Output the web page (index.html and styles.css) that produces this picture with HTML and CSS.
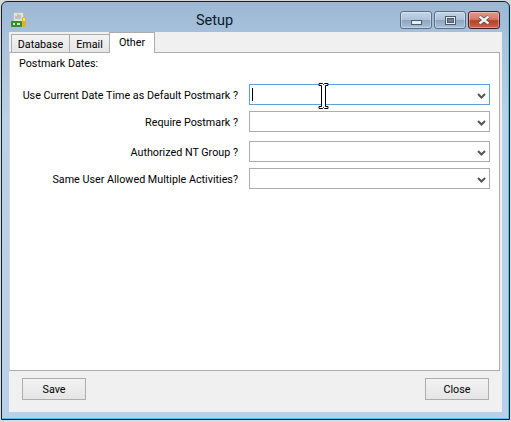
FILE: index.html
```html
<!DOCTYPE html>
<html lang="en">
<head>
<meta charset="utf-8">
<title>Setup</title>
<link rel="stylesheet" href="styles.css">
</head>
<body>
<div class="window">
  <header class="titlebar">
    <svg class="app-icon" width="16" height="16" viewBox="0 0 16 16">
      <rect x="2.500" y="0.500" width="10" height="9" fill="#dfe3dc" stroke="#aab0a8" stroke-width="0.5"/>
      <path d="M5 7V4M7 7V2M9 7V3" stroke="#9aa29a" stroke-width="1"/>
      <rect x="0" y="9" width="11" height="6" rx="1" fill="#3d8a2a"/>
      <path d="M2 11h2v2H2zM6 11h3v2H6z" fill="#cfe8b8"/>
      <rect x="11" y="5" width="4" height="10" rx="1" fill="#d8b42c"/>
      <rect x="12" y="6" width="2" height="3" fill="#f4e27a"/>
    </svg>
    <span class="title">Setup</span>
    <div class="controls">
      <div class="ctl"><span class="min-glyph"></span></div>
      <div class="ctl"><span class="max-glyph"></span></div>
      <div class="ctl ctl-close">
        <svg width="14" height="10" viewBox="0 0 14 10"><path d="M2.5 1.5 L11.5 8.5 M11.5 1.5 L2.5 8.5" stroke="#50403f" stroke-width="3.6"/><path d="M2.5 1.5 L11.5 8.5 M11.5 1.5 L2.5 8.5" stroke="#f2f2f2" stroke-width="2.4"/></svg>
      </div>
    </div>
  </header>
  <div class="client">
    <nav class="tabs">
      <div class="tab">Database</div>
      <div class="tab">Email</div>
      <div class="tab tab-active">Other</div>
    </nav>
    <main class="page">
      <div class="heading">Postmark Dates:</div>
      <div class="form">
        <div class="row row-a">
          <label class="lbl">Use Current Date Time as Default Postmark ?</label>
          <div class="combo combo-focus"><span class="caret"></span><svg class="chev" width="9" height="6" viewBox="0 0 9 6"><path d="M1 1 L4.500 4.500 L8 1" fill="none" stroke="#555" stroke-width="2"/></svg></div>
        </div>
        <div class="row row-b">
          <label class="lbl">Require Postmark ?</label>
          <div class="combo"><svg class="chev" width="9" height="6" viewBox="0 0 9 6"><path d="M1 1 L4.500 4.500 L8 1" fill="none" stroke="#555" stroke-width="2"/></svg></div>
        </div>
        <div class="row row-c">
          <label class="lbl">Authorized NT Group ?</label>
          <div class="combo"><svg class="chev" width="9" height="6" viewBox="0 0 9 6"><path d="M1 1 L4.500 4.500 L8 1" fill="none" stroke="#555" stroke-width="2"/></svg></div>
        </div>
        <div class="row row-d">
          <label class="lbl">Same User Allowed Multiple Activities?</label>
          <div class="combo"><svg class="chev" width="9" height="6" viewBox="0 0 9 6"><path d="M1 1 L4.500 4.500 L8 1" fill="none" stroke="#555" stroke-width="2"/></svg></div>
        </div>
      </div>
    </main>
    <footer class="actions">
      <button class="btn" type="button">Save</button>
      <button class="btn" type="button">Close</button>
    </footer>
  </div>
  <svg class="ibeam" width="11" height="26" viewBox="0 0 11 26">
    <path d="M1 .5H4.500L5.500 1.500L6.500 .5H10V2.500H7.500V23.500H10V25.500H6.500L5.500 24.500L4.500 25.500H1V23.500H3.500V2.500H1Z" fill="#fff" stroke="#000"/>
  </svg>
</div>
</body>
</html>
```
FILE: styles.css
```css
* { box-sizing: border-box; }
html, body { margin: 0; padding: 0; }
body {
  width: 511px;
  height: 422px;
  padding: 1px;
  background: #d6dadd;
  overflow: hidden;
  font-family: Roboto, Arial, sans-serif;
  font-size: 10.75px;
  color: #000;
}
.window {
  position: relative;
  width: 509px;
  height: 419px;
  border: 1px solid #1a1f24;
  border-radius: 6px 6px 0 0;
  padding: 0 7px 7px;
  background: linear-gradient(180deg, #9db8d4 0, #a9c3dd 40px, #b9d2ec 120px, #b8d1ea 100%);
  box-shadow: inset -1px -1px 0 #4fc3e8;
  display: flex;
  flex-direction: column;
}
.titlebar {
  height: 30px;
  flex: none;
  display: flex;
  align-items: center;
  position: relative;
}
.app-icon { margin: 0 0 0 2px; position: relative; top: 3px; }
.title {
  position: absolute;
  left: 0;
  right: 0;
  padding-right: 82px;
  text-align: center;
  font-size: 14.5px;
  line-height: 18px;
  top: 10px;
  color: #0a1a2c;
}
.controls {
  position: absolute;
  top: 9px;
  right: 2px;
  display: flex;
  gap: 2px;
}
.ctl {
  width: 32px;
  height: 18px;
  border: 1px solid #5c6d84;
  border-radius: 3px;
  background: linear-gradient(180deg, #c3d5e8 0, #adc3da 48%, #8ba6c2 52%, #a8c0d8 100%);
  box-shadow: inset 0 0 0 1px rgba(255,255,255,.35);
  display: flex;
  align-items: center;
  justify-content: center;
}
.ctl-close {
  border-color: #4b1a24;
  background: linear-gradient(180deg, #e29a8c 0, #d67a6a 45%, #b83f24 55%, #c8664e 100%);
}
.min-glyph {
  width: 11px;
  height: 5px;
  margin-top: 4px;
  background: #e9eef3;
  border: 1px solid #4d5a6c;
}
.max-glyph {
  width: 11px;
  height: 9px;
  background: #e9eef3;
  border: 1px solid #4d5a6c;
  display: flex;
  align-items: center;
  justify-content: center;
}
.max-glyph::after {
  content: "";
  width: 5px;
  height: 3px;
  background: #6f8199;
  border: 1px solid #4d5a6c;
}
.client {
  flex: 1;
  background: #f0f0f0;
  display: flex;
  flex-direction: column;
  min-height: 0;
}
.tabs {
  display: flex;
  align-items: flex-end;
  height: 20px;
  padding-left: 2px;
  flex: none;
  position: relative;
  z-index: 1;
}
.tab {
  height: 18px;
  border: 1px solid #acacac;
  border-bottom: 0;
  background: linear-gradient(180deg, #f3f3f3, #e6e6e6);
  display: flex;
  align-items: center;
  justify-content: center;
  margin-right: -1px;
  padding-top: 1px;
}
.tab:nth-child(1) { width: 59px; }
.tab:nth-child(2) { width: 41px; }
.tab-active {
  width: 46px;
  height: 21px;
  margin-bottom: -1px;
  background: #fff;
  padding-bottom: 2px;
}
.page {
  flex: 1;
  margin: 0 2px 0 0;
  background: #fff;
  border: 1px solid #acacac;
  border-left-color: #d5d5d5;
  padding: 4px 9px 0 9px;
  min-height: 0;
}
.heading { height: 14px; line-height: 14px; }
.form { display: flex; flex-direction: column; }
.row {
  display: flex;
  align-items: center;
  justify-content: flex-end;
  height: 21px;
}
.row-a { margin-top: 13px; }
.row-b { margin-top: 6px; }
.row-c { margin-top: 9px; }
.row-d { margin-top: 6px; }
.lbl { margin-right: 11px; padding-top: 2px; white-space: nowrap; }
.combo {
  width: 241px;
  height: 21px;
  flex: none;
  border: 1px solid #abadb3;
  background: #fff;
  display: flex;
  align-items: center;
  justify-content: flex-end;
  padding-right: 3px;
  position: relative;
}
.combo-focus { border-color: #5a9fe0; }
.caret {
  position: absolute;
  left: 2px;
  top: 3px;
  width: 1px;
  height: 13px;
  background: #000;
}
.chev { margin-top: 2px; }
.actions {
  height: 41px;
  flex: none;
  display: flex;
  justify-content: space-between;
  padding: 7px 13px 0;
}
.btn {
  width: 64px;
  height: 22px;
  border: 1px solid #adadad;
  background: linear-gradient(180deg, #f2f2f2, #e5e5e5);
  font: inherit;
  color: #000;
  padding: 0;
}
.ibeam {
  position: absolute;
  left: 316px;
  top: 81px;
}
```
